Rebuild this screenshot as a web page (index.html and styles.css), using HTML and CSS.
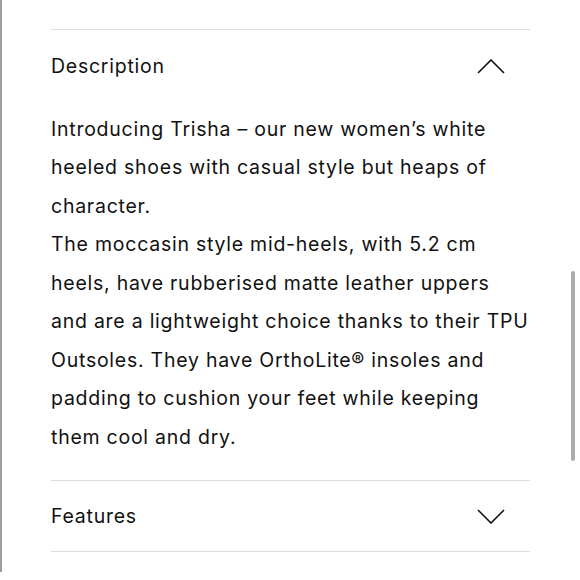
FILE: index.html
```html
<!DOCTYPE html>
<html lang="en">
<head>
<meta charset="utf-8">
<title>Description</title>
<link rel="stylesheet" href="styles.css">
</head>
<body>
<div class="panel">
  <div class="accordion">
    <section class="item">
      <div class="item-head">
        <span class="item-title">Description</span>
        <svg class="chev" width="28" height="15" viewBox="0 0 28 15" aria-hidden="true"><polyline points="1,14 14,1 27,14" fill="none" stroke="#111" stroke-width="1.6"/></svg>
      </div>
      <div class="item-body">
        <p>Introducing Trisha – our new women’s white<br>heeled shoes with casual style but heaps of<br>character.</p>
        <p>The moccasin style mid-heels, with 5.2 cm<br>heels, have rubberised matte leather uppers<br>and are a lightweight choice thanks to their TPU<br>Outsoles. They have OrthoLite® insoles and<br>padding to cushion your feet while keeping<br>them cool and dry.</p>
      </div>
    </section>
    <section class="item">
      <div class="item-head item-head-closed">
        <span class="item-title">Features</span>
        <svg class="chev" width="28" height="15" viewBox="0 0 28 15" aria-hidden="true"><polyline points="1,1 14,14 27,1" fill="none" stroke="#111" stroke-width="1.6"/></svg>
      </div>
    </section>
  </div>
  <div class="scrollbar"></div>
</div>
</body>
</html>
```

FILE: styles.css
```css
html, body {
  margin: 0;
  padding: 0;
  background: #ffffff;
}

body {
  font-family: Inter, "Noto Sans", sans-serif;
  color: #111111;
  font-size: 19.5px;
  line-height: 38.5px;
  letter-spacing: 0.75px;
}

.panel {
  position: relative;
  height: 572px;
  border-left: 2px solid #9c9c9c;
  padding-left: 49px;
  padding-top: 29px;
  box-sizing: border-box;
}

.accordion {
  width: 479px;
  border-top: 1px solid #dedede;
}

.item {
  border-bottom: 1px solid #dedede;
}

.item-head {
  display: flex;
  justify-content: space-between;
  align-items: center;
  padding: 17px 25px 17px 0;
}

.item-head-closed {
  padding: 16px 25px 15px 0;
}

.item-title {
  display: block;
}

.chev {
  display: block;
}

.item-body {
  width: 522px;
  padding: 7px 0 24px 0;
  white-space: nowrap;
}

.item-body p {
  margin: 0;
}

.scrollbar {
  position: absolute;
  left: 569px;
  top: 271px;
  width: 4px;
  height: 190px;
  border-radius: 2px;
  background: #ababab;
}
```
